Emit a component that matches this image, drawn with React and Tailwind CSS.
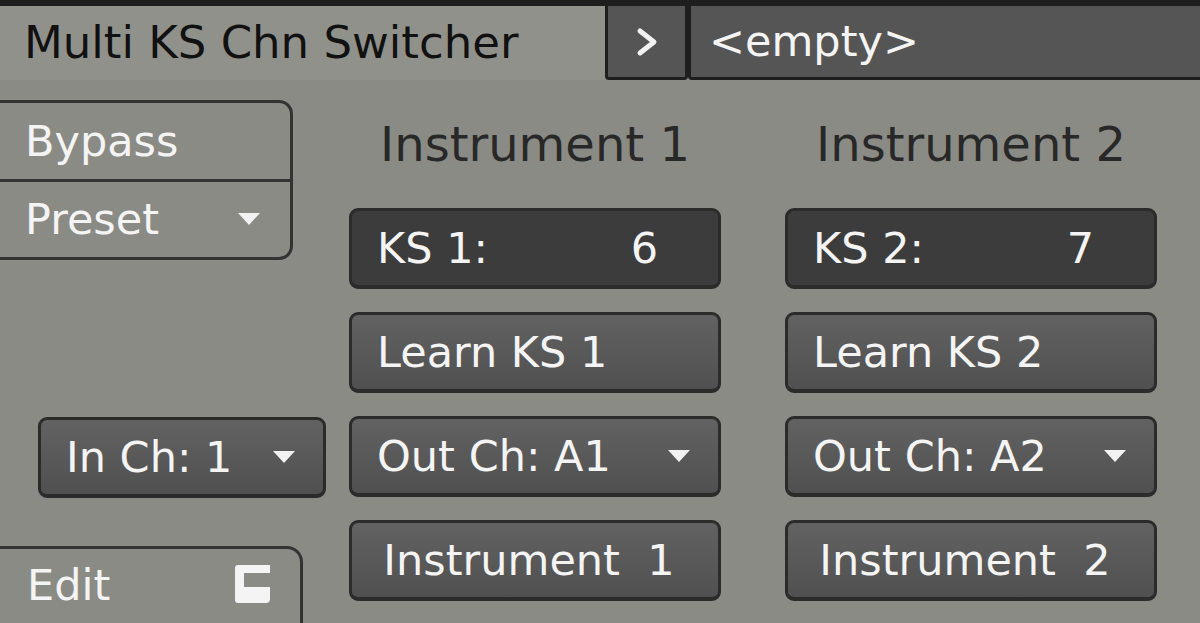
import React from 'react';

const font = { fontFamily: '"DejaVu Sans", Verdana, sans-serif' };

const Tri = () => (
  <svg width="26" height="16" viewBox="0 0 26 16" className="shrink-0">
    <path d="M2 2 L24 2 L13 14 Z" fill="#f2f2f2" />
  </svg>
);

const Btn = ({ children, dark, className = '' }) => (
  <div
    className={`h-[81px] flex items-center rounded-[9px] border-[3px] border-b-[4px] border-[#2b2b2b] text-[43px] text-[#f4f4f4] ${
      dark ? 'bg-[#3c3c3c]' : 'bg-gradient-to-b from-[#626262] to-[#505050]'
    } ${className}`}
  >
    {children}
  </div>
);

const Column = ({ n, out }) => (
  <div className="w-[372px] flex flex-col">
    <div className="h-[128px] flex items-center justify-center text-[48px] text-[#282828]">
      Instrument {n}
    </div>
    <div className="flex flex-col gap-[23px]">
      <Btn dark className="pl-[25px] pr-[60px] justify-between">
        <span>KS {n}:</span>
        <span>{n === 1 ? 6 : 7}</span>
      </Btn>
      <Btn className="pl-[25px]">Learn KS {n}</Btn>
      <Btn className="pl-[25px] pr-[26px] justify-between">
        <span>Out Ch: {out}</span>
        <Tri />
      </Btn>
      <Btn className="justify-center pr-[12px]">
        <span className="whitespace-pre">Instrument  {n}</span>
      </Btn>
    </div>
  </div>
);

export default function App() {
  return (
    <div className="w-[1200px] h-[623px] overflow-hidden bg-[#8b8b86] flex flex-col select-none" style={font}>
      <div className="h-[6px] bg-[#1e1e1e] shrink-0" />
      {/* header */}
      <div className="h-[74px] flex shrink-0">
        <div className="w-[605px] bg-[#91918c] flex items-center pl-[24px] text-[45px] text-[#111]">
          Multi KS Chn Switcher
        </div>
        <div className="w-[83px] bg-[#555] border-[3px] border-t-0 border-[#1e1e1e] rounded-b-[4px] flex items-center justify-center">
          <svg width="22" height="30" viewBox="0 0 22 30">
            <path d="M4 4 L18 15 L4 26" fill="none" stroke="#f2f2f2" strokeWidth="5" strokeLinecap="round" strokeLinejoin="round" />
          </svg>
        </div>
        <div className="flex-1 bg-[#555] border-[3px] border-t-0 border-r-0 border-[#1e1e1e] rounded-bl-[4px] flex items-center pl-[18px] text-[43px] text-[#f4f4f4]">
          &lt;empty&gt;
        </div>
      </div>

      <div className="flex flex-1">
        {/* left */}
        <div className="w-[349px] flex flex-col pt-[20px]">
          <div className="w-[296px] -ml-[3px] h-[160px] border-[3px] border-[#333] rounded-r-[14px] flex flex-col text-[43px] text-[#f4f4f4]">
            <div className="flex-1 flex items-center pl-[25px]">Bypass</div>
            <div className="h-[3px] bg-[#333]" />
            <div className="flex-1 flex items-center justify-between pl-[25px] pr-[28px]">
              <span>Preset</span>
              <Tri />
            </div>
          </div>
          <div className="mt-[157px] ml-[38px] w-[288px]">
            <Btn className="pl-[25px] pr-[26px] justify-between">
              <span>In Ch: 1</span>
              <Tri />
            </Btn>
          </div>
          <div className="mt-[48px] w-[306px] -ml-[3px] flex-1 border-[3px] border-b-0 border-[#333] rounded-tr-[16px] flex items-start justify-between pl-[27px] pr-[30px] pt-[4px] text-[43px] text-[#f4f4f4]">
            <span>Edit</span>
            <svg width="35" height="38" viewBox="0 0 35 38" className="mt-[12px]">
              <path d="M3 0 H35 V8 H9 V22 H35 V34 Q35 38 31 38 H3 Q0 38 0 35 V3 Q0 0 3 0 Z" fill="#f4f4f4" />
            </svg>
          </div>
        </div>
        <Column n={1} out="A1" />
        <div className="w-[64px]" />
        <Column n={2} out="A2" />
      </div>
    </div>
  );
}
